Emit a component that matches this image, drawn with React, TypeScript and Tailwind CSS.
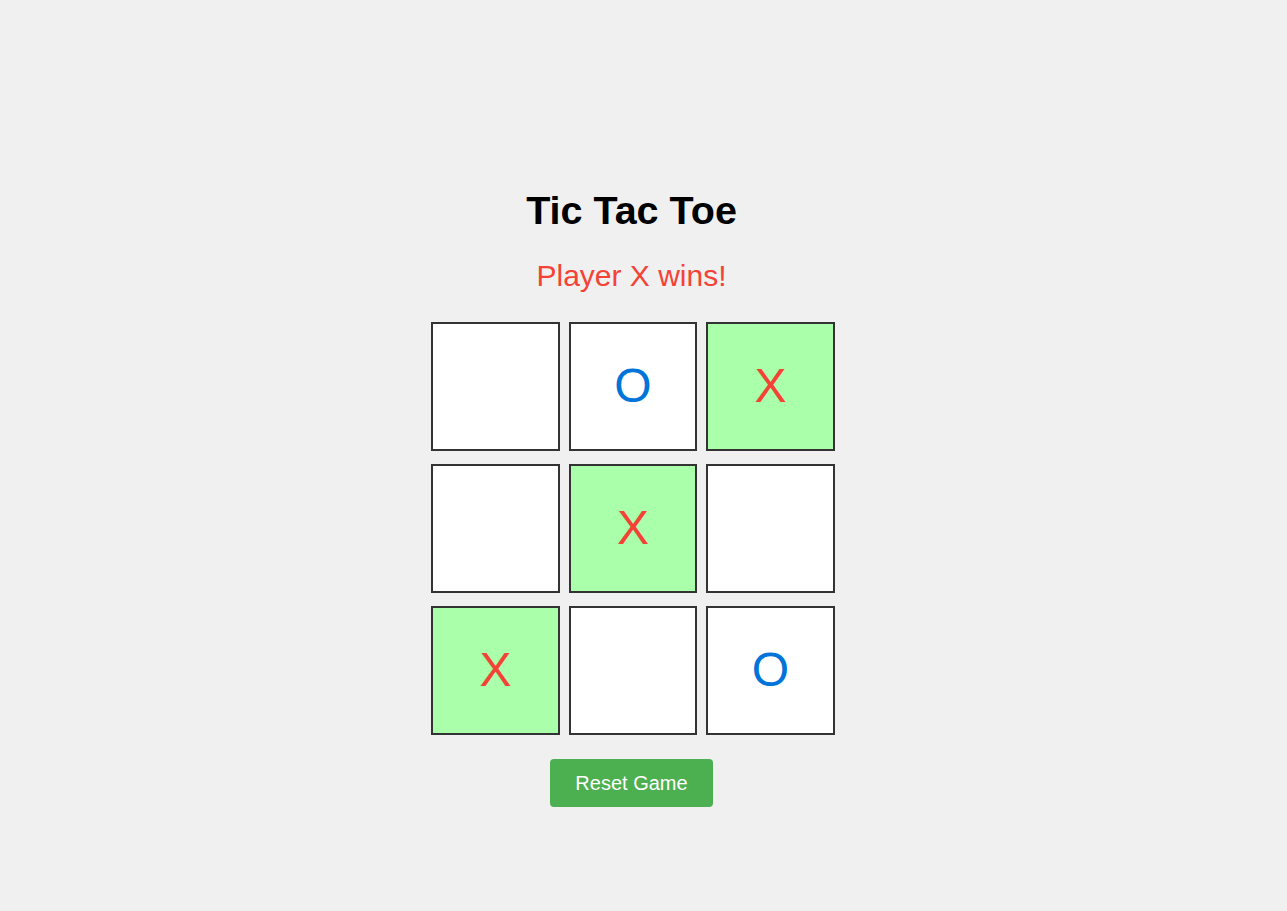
import React, { useState } from 'react';

type Mark = 'X' | 'O' | null;

const START: Mark[] = [null, 'O', 'X', null, 'X', null, 'X', null, 'O'];
const LINES = [
  [0, 1, 2],
  [3, 4, 5],
  [6, 7, 8],
  [0, 3, 6],
  [1, 4, 7],
  [2, 5, 8],
  [0, 4, 8],
  [2, 4, 6],
];

function findWinner(board: Mark[]) {
  for (const [a, b, c] of LINES) {
    if (board[a] && board[a] === board[b] && board[a] === board[c]) {
      return { player: board[a], line: [a, b, c] };
    }
  }
  return null;
}

export default function App() {
  const [board, setBoard] = useState<Mark[]>(START);
  const [next, setNext] = useState<'X' | 'O'>('O');

  const win = findWinner(board);
  const status = win
    ? `Player ${win.player} wins!`
    : board.every(Boolean)
      ? "It's a draw!"
      : `Player ${next}'s turn`;

  const play = (i: number) => {
    if (board[i] || win) return;
    const copy = board.slice();
    copy[i] = next;
    setBoard(copy);
    setNext(next === 'X' ? 'O' : 'X');
  };

  const reset = () => {
    setBoard(Array(9).fill(null));
    setNext('X');
  };

  return (
    <div className="min-h-screen bg-[#f0f0f0] flex flex-col items-center pt-[188px] pr-[24px] font-['Liberation_Sans',Arial,sans-serif]">
      <h1 className="text-[39.5px] leading-[45px] font-bold text-black">Tic Tac Toe</h1>
      <p className="mt-[25px] text-[30px] leading-[35px] text-[#f44336]">{status}</p>

      <div className="mt-[29px] pl-[3px]">
        <div className="grid grid-cols-[repeat(3,128.5px)] gap-x-[9px] gap-y-[13.5px]">
          {board.map((mark, i) => {
            const lit = win?.line.includes(i);
            return (
              <button
                key={i}
                onClick={() => play(i)}
                className={`w-[128.5px] h-[128.5px] border-2 border-[#333] flex items-center justify-center text-[48px] leading-none cursor-pointer ${
                  lit ? 'bg-[#aaffaa]' : 'bg-white'
                } ${mark === 'X' ? 'text-[#f44336]' : 'text-[#0074d9]'}`}
              >
                {mark}
              </button>
            );
          })}
        </div>
      </div>

      <button
        onClick={reset}
        className="mt-[24px] px-[25px] py-3 text-[20px] leading-[24px] text-white bg-[#4caf50] rounded-[4px] cursor-pointer"
      >
        Reset Game
      </button>
    </div>
  );
}
